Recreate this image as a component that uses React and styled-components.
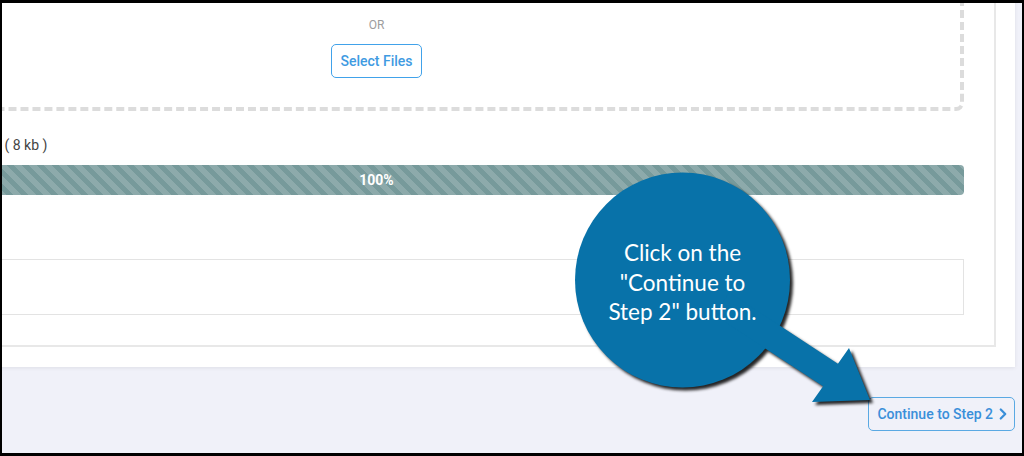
import React from 'react';
import styled, { createGlobalStyle } from 'styled-components';
import { ChevronRight } from 'lucide-react';

const GlobalStyle = createGlobalStyle`
    html, body {
        margin:0;
        padding:0;
    }
    body {
        background:#000;
        font-family: Roboto, "Liberation Sans", sans-serif;
    }
`;

const Frame = styled.div`
    position:relative;
    width:1024px;
    height:456px;
    box-sizing:border-box;
    border-style:solid;
    border-color:#000;
    border-width:3px 2px 3px 2px;
    background:#f0f1f9;
    overflow:hidden;
`;

const Card = styled.section`
    margin:-106px 7px 0 -265px;
    padding:20px 19px 20px 20px;
    background:#fff;
    box-shadow:0 1px 4px rgba(0,0,0,0.08);
`;

const Panel = styled.div`
    border:2px solid #e8e8e8;
    padding:30px;
`;

const Dropzone = styled.div`
    display:flex;
    flex-direction:column;
    align-items:center;
    border:4px dashed #dcdcdc;
    border-radius:8px;
    padding:64px 20px 29px;
`;

const OrLabel = styled.div`
    font-size:12px;
    line-height:16px;
    color:#9d9d9d;
    margin-bottom:11px;
`;

const OutlineButton = styled.button`
    display:inline-flex;
    align-items:center;
    gap:1px;
    height:34px;
    padding:${p => p.$pad};
    border:1px solid ${p => p.$border};
    border-radius:5px;
    background:transparent;
    color:${p => p.$color};
    font-family:Roboto, "Liberation Sans", sans-serif;
    font-weight:500;
    font-size:14px;
    cursor:pointer;
`;

const FileRow = styled.div`
    margin-top:24px;
    font-size:14px;
    line-height:20px;
    color:#444;
    white-space:nowrap;
`;

const FileName = styled.span`
    display:inline-block;
    width:212px;
    text-align:right;
    overflow:hidden;
    vertical-align:top;
    color:#3c8dd8;
`;

const Progress = styled.div`
    margin-top:10px;
    height:30px;
    border-radius:4px;
    display:flex;
    align-items:center;
    justify-content:center;
    background-color:#779a9b;
    background-image:linear-gradient(45deg,
        rgba(255,255,255,0.16) 25%, transparent 25%,
        transparent 50%, rgba(255,255,255,0.16) 50%,
        rgba(255,255,255,0.16) 75%, transparent 75%, transparent);
    background-size:15px 15px;
    color:#fff;
    font-weight:700;
    font-size:14px;
`;

const NoteBox = styled.div`
    margin-top:64px;
    height:54px;
    border:1px solid #e3e3e3;
`;

const Footer = styled.div`
    display:flex;
    justify-content:flex-end;
    margin:30px 7px 0 0;
`;

const Callout = styled.div`
    position:absolute;
    left:568px;
    top:162px;
    width:310px;
    height:250px;
`;

const CalloutShape = styled.svg`
    display:block;
    overflow:visible;
    filter:drop-shadow(3px 3px 1.5px rgba(0,0,0,0.85));
`;

const CalloutText = styled.div`
    position:absolute;
    left:5px;
    top:73px;
    width:215px;
    text-align:center;
    color:#fff;
    font-family:Lato, "Open Sans", sans-serif;
    font-size:22.5px;
    line-height:29.5px;
`;

const App = () => {
  return (
    <Frame>
        <GlobalStyle/>
        <Card>
            <Panel>
                <Dropzone>
                    <OrLabel>OR</OrLabel>
                    <OutlineButton $pad="0 8px" $border="#41a2ea" $color="#3f9be2">
                        Select Files
                    </OutlineButton>
                </Dropzone>
                <FileRow>
                    <FileName>website-backup.zip</FileName> ( 8 kb )
                </FileRow>
                <Progress>100%</Progress>
                <NoteBox/>
            </Panel>
        </Card>
        <Footer>
            <OutlineButton $pad="0 2px 0 8px" $border="#5aa9e3" $color="#3a8fd9">
                Continue to Step 2
                <ChevronRight size={18} strokeWidth={3}/>
            </OutlineButton>
        </Footer>
        <Callout>
            <CalloutShape width="310" height="250" viewBox="0 0 310 250">
                <circle cx="112.5" cy="115" r="107.5" fill="#0872a9"/>
                <polygon
                    points="159.2,127.5 267.9,198.7 279,183 300,235 242,237 253.1,221.3 144.4,150.1"
                    fill="#0872a9"
                />
            </CalloutShape>
            <CalloutText>
                Click on the<br/>"Continue to<br/>Step 2" button.
            </CalloutText>
        </Callout>
    </Frame>
  )
}

export default App
